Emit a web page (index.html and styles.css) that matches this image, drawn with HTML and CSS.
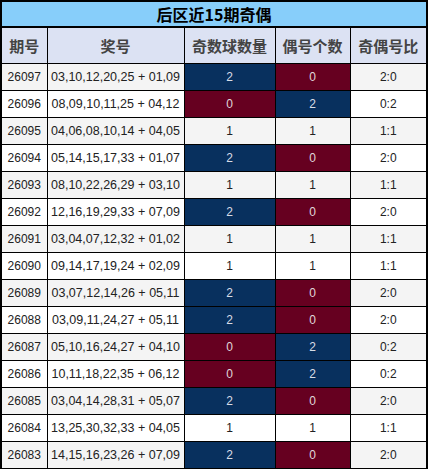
FILE: index.html
```html
<!DOCTYPE html>
<html lang="zh-CN">
<head>
    <meta charset="UTF-8">
    <title>后区近15期奇偶</title>
    <link rel="stylesheet" href="styles.css">
</head>
<body>
    <table class="odd-even">
        <colgroup>
            <col class="c-issue">
            <col class="c-nums">
            <col class="c-odd">
            <col class="c-even">
            <col class="c-ratio">
        </colgroup>
        <thead>
            <tr>
                <th class="title" colspan="5">后区近15期奇偶</th>
            </tr>
            <tr class="head">
                <th>期号</th>
                <th>奖号</th>
                <th>奇数球数量</th>
                <th>偶号个数</th>
                <th>奇偶号比</th>
            </tr>
        </thead>
        <tbody id="rows">
            <!-- rows are filled in by the script below -->
        </tbody>
    </table>

    <script>
        const draws = [
            ['26097', '03,10,12,20,25 + 01,09', 2, 0],
            ['26096', '08,09,10,11,25 + 04,12', 0, 2],
            ['26095', '04,06,08,10,14 + 04,05', 1, 1],
            ['26094', '05,14,15,17,33 + 01,07', 2, 0],
            ['26093', '08,10,22,26,29 + 03,10', 1, 1],
            ['26092', '12,16,19,29,33 + 07,09', 2, 0],
            ['26091', '03,04,07,12,32 + 01,02', 1, 1],
            ['26090', '09,14,17,19,24 + 02,09', 1, 1],
            ['26089', '03,07,12,14,26 + 05,11', 2, 0],
            ['26088', '03,09,11,24,27 + 05,11', 2, 0],
            ['26087', '05,10,16,24,27 + 04,10', 0, 2],
            ['26086', '10,11,18,22,35 + 06,12', 0, 2],
            ['26085', '03,04,14,28,31 + 05,07', 2, 0],
            ['26084', '13,25,30,32,33 + 04,05', 1, 1],
            ['26083', '14,15,16,23,26 + 07,09', 2, 0]
        ];

        // 2 -> blue, 0 -> red, 1 -> plain
        function countClass(n) {
            if (n === 2) return 'blue';
            if (n === 0) return 'red';
            return '';
        }

        const tbody = document.getElementById('rows');
        draws.forEach(d => {
            const tr = document.createElement('tr');
            tr.innerHTML = `
                <td>${d[0]}</td>
                <td class="nums">${d[1]}</td>
                <td class="${countClass(d[2])}">${d[2]}</td>
                <td class="${countClass(d[3])}">${d[3]}</td>
                <td>${d[2]}:${d[3]}</td>
            `;
            tbody.appendChild(tr);
        });
    </script>
</body>
</html>
```

FILE: styles.css
```css
body {
    margin: 0;
    padding: 0;
    background-color: #fff;
    font-family: 'Liberation Sans', Arial, 'Noto Sans CJK SC', sans-serif;
}

.odd-even {
    width: 428px;
    border-collapse: collapse;
    table-layout: fixed;
    border: 2px solid #000;
}

.c-issue { width: 46px; }
.c-nums { width: 137px; }
.c-odd { width: 91px; }
.c-even { width: 75px; }

.odd-even th,
.odd-even td {
    border: 1px solid #000;
    padding: 0;
    text-align: center;
}

.title {
    height: 22px;
    background-color: #87cefa;
    color: #000;
    font-family: 'Noto Sans CJK SC', sans-serif;
    font-size: 16px;
    font-weight: bold;
    border-bottom: 2px solid #000 !important;
}

.head th {
    height: 35px;
    background-color: #dce2f3;
    color: #444;
    font-family: 'Noto Sans CJK SC', sans-serif;
    font-size: 15px;
    font-weight: bold;
}

.odd-even td {
    height: 26px;
    font-size: 12px;
    color: #222;
    background-color: #fff;
}

.odd-even tbody tr:nth-child(odd) td {
    background-color: #f4f4f4;
}

.odd-even td.nums {
    font-size: 12.5px;
}

.odd-even tbody tr td.blue {
    background-color: #08305e;
    color: #d8dde6;
}

.odd-even tbody tr td.red {
    background-color: #660020;
    color: #e0d6da;
}
```
